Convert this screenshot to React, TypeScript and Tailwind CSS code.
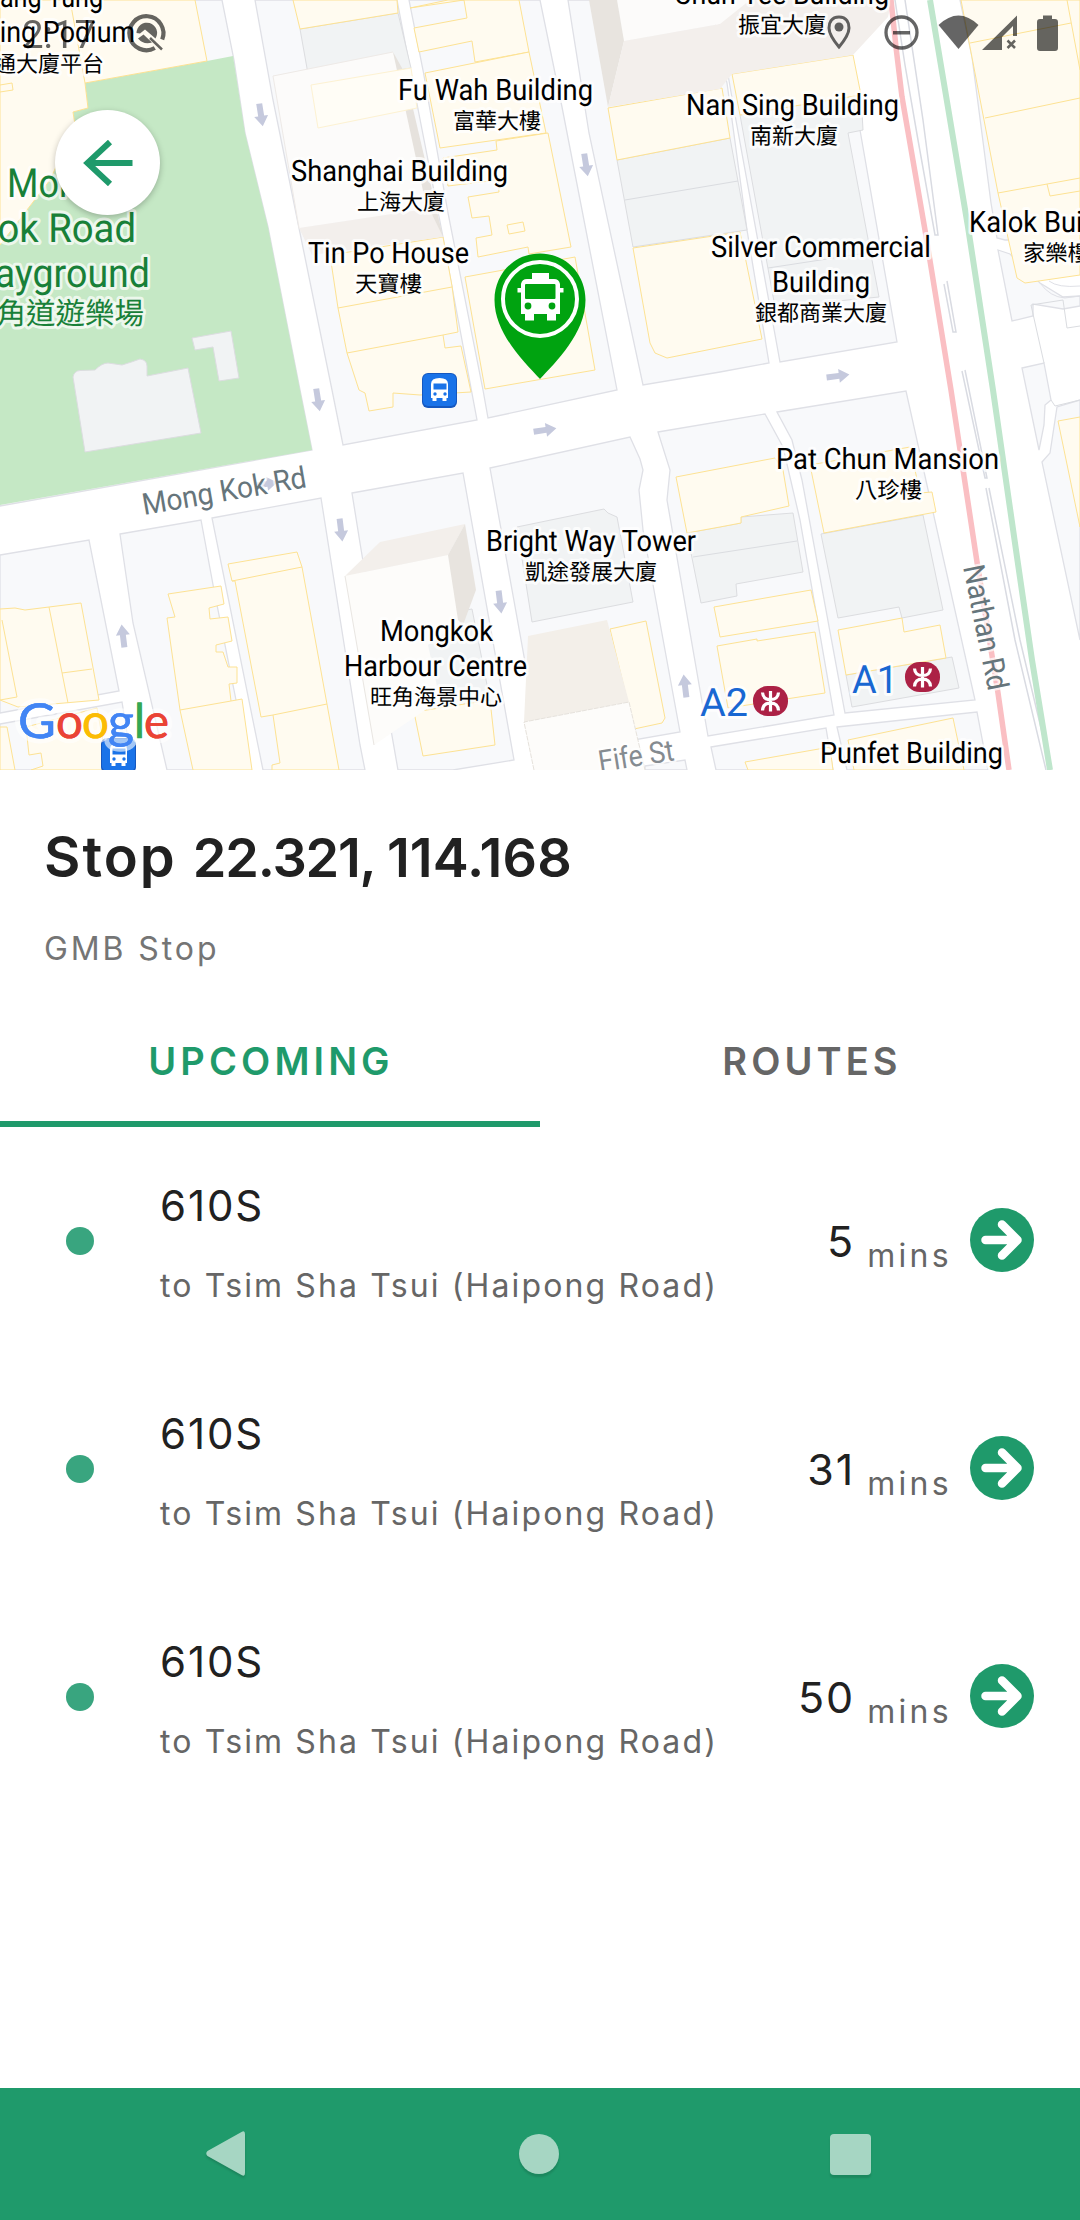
import React from "react";

const BLOCKS = [
  "0,0 222,0 234,60 245,133 268,227 300,390 312,450 0,506",
  "255,0 397,0 410,68 443,237 452,287 477,420 343,445 332,390 299,228 273,100",
  "409,0 540,0 562,107 617,390 488,418 483,390 448,213 423,70",
  "568,0 710,0 727,83 747,230 769,363 720,372 643,385 589,133",
  "715,0 842,0 860,130 897,342 780,362 735,115",
  "960,0 1080,0 1080,240 1005,240 997,238 991,203 972,57",
  "998,250 1010,254 1040,283 1063,297 1080,296 1080,306 1063,309 1033,304 1033,316 1012,321",
  "1022,368 1044,363 1051,400 1045,405 1044,425 1039,450",
  "1042,462 1050,453 1057,407 1080,400 1080,640",
  "0,555 89,540 119,691 0,713",
  "0,724 122,702 133,770 0,770",
  "120,534 201,520 214,590 250,770 167,770 133,623",
  "212,518 321,498 345,650 360,745 365,770 263,770",
  "352,493 463,473 514,760 453,770 398,770 387,707 360,543",
  "490,468 630,437 640,459 643,470 639,490 643,530 680,732 542,756",
  "645,766 685,760 687,770 645,770",
  "658,432 765,414 783,447 800,520 834,715 708,736 667,500 670,470",
  "777,412 906,391 975,700 845,713 802,480 792,440",
  "837,727 977,712 988,770 847,770",
  "711,747 826,728 833,770 716,770",
];

const CREAM = [
  "0,0 195,0 207,61 85,83 88,108 73,112 75,125 50,180 0,245",
  "293,0 397,0 398,13 300,29",
  "330,255 443,237 452,286 458,332 443,335 445,348 461,346 471,392 420,395 393,393 393,407 369,411 365,393 359,390 347,353 338,308",
  "410,8 448,0 519,0 529,52 475,62 472,41 419,52 414,28 467,18 464,0",
  "425,73 529,52 546,133 440,148",
  "443,158 497,150 496,141 548,133 571,247 529,254 528,247 478,257 476,238 492,235 489,216 472,218 468,197 499,192 498,180 448,186",
  "465,277 575,257 595,370 485,389",
  "608,108 722,88 730,138 617,160",
  "633,248 740,232 762,339 667,358 655,353 650,343",
  "732,74 853,55 861,95 740,115",
  "961,0 1080,0 1080,275 1025,283 1017,278 998,193",
  "1058,421 1080,417 1080,527",
  "0,609 15,608 25,610 49,607 81,603 99,700 18,707 0,700",
  "26,727 97,708 108,770 31,770 43,766 41,753 29,755",
  "0,727 7,727 15,770 0,770",
  "168,594 221,586 224,604 209,608 210,619 228,617 232,641 216,645 216,652 223,652 228,667 237,667 237,683 229,684 231,701 242,699 252,770 193,770 180,710 167,618 175,617",
  "228,564 297,552 302,567 339,770 272,770 272,765 280,763 273,715 261,717 235,581 232,581",
  "414,712 490,700 495,745 423,756",
  "610,629 646,621 665,718 662,723 634,729",
  "676,477 775,458 783,470 789,506 741,517 741,523 720,527 687,533",
  "714,607 811,590 818,621 720,637",
  "717,646 757,639 757,641 815,632 825,693 728,708",
  "810,465 910,447 920,493 932,492 936,512 824,533",
  "838,630 902,618 904,632 940,625 946,658 846,675",
  "848,740 953,718 964,770 854,770",
  "745,762 830,747 833,770 748,770",
];

const GREY = [
  "300,29 398,13 411,68 310,85",
  "617,160 730,138 747,230 633,247",
  "740,115 861,95 863,130 848,133 879,297 775,307",
  "405,620 472,609 490,700 413,712",
  "517,527 604,509 608,513 617,517 633,602 532,622",
  "687,533 741,523 741,517 793,513 803,572 736,584 737,596 701,603",
  "821,534 923,515 943,610 902,618 899,607 838,618",
  "846,675 952,657 959,688 852,707",
];

const CREAM_LINES = [
  "70,0 85,83", "0,85 12,83 13,90 0,92", "338,308 452,287", "347,353 443,335",
  "507,225 523,222 525,231 509,234 507,225", "970,43 1071,23", "1067,0 1080,70", "985,118 1080,98",
  "998,193 1080,178", "1047,184 1050,196 1080,191", "49,607 68,703", "62,673 92,669", "2,620 17,697 0,700",
  "180,710 231,701", "232,581 302,567", "273,715 327,704",
];

const GREY_LINES = ["625,200 738,181", "768,268 873,252", "693,557 797,541", "1044,363 1031,305 1063,300 1067,328 1080,326", "1051,400 1055,406 1080,400"];

// Pale raised buildings: roof, shaded front and shaded side
const RAISED: [string, string][] = [
  ["273,76 393,52 432,208 299,228", "#fcfbfa"],
  ["299,228 432,208 443,237 312,255", "#f3efec"],
  ["393,52 402,68 411,100 443,237 425,200", "#e6e2dd"],
  ["617,0 870,0 860,12 720,24 624,41", "#fcfbfa"],
  ["589,0 617,0 624,41 608,107", "#e8e4df"],
  ["624,41 720,24 750,0 892,0 888,17 853,55 732,74 720,89 608,107", "#f3efec"],
  ["345,576 448,555 460,622 428,645 440,700 374,745", "#fdfcfa"],
  ["345,576 380,542 465,524 448,555", "#f3efeb"],
  ["465,524 476,590 463,625 458,620 448,555", "#e8e4df"],
  ["528,636 607,620 629,702 524,722", "#f3efe9"],
  ["524,722 629,702 645,770 534,770", "#fdfcfa"],
];

type Label = { t: string; x: number; y: number; w: number };
const LABELS: Label[] = [
  { t: "Chun Yee Building", x: 674, y: 4, w: 215 },
  { t: "Fu Wah Building", x: 398, y: 100, w: 195 },
  { t: "Shanghai Building", x: 291, y: 181, w: 217 },
  { t: "Tin Po House", x: 308, y: 263, w: 161 },
  { t: "Nan Sing Building", x: 686, y: 115, w: 213 },
  { t: "Silver Commercial", x: 711, y: 257, w: 220 },
  { t: "Building", x: 772, y: 292, w: 98 },
  { t: "Kalok Building", x: 969, y: 232, w: 173 },
  { t: "Pat Chun Mansion", x: 776, y: 469, w: 223 },
  { t: "Bright Way Tower", x: 486, y: 551, w: 210 },
  { t: "Mongkok", x: 380, y: 641, w: 113 },
  { t: "Harbour Centre", x: 344, y: 676, w: 183 },
  { t: "Punfet Building", x: 820, y: 763, w: 183 },
  { t: "Wang Tung", x: -22, y: 7, w: 125 },
  { t: "Building Podium", x: -60, y: 42, w: 195 },
];
const CJK_LABELS: Label[] = [
  { t: "振宜大廈", x: 738, y: 33, w: 88 },
  { t: "富華大樓", x: 453, y: 129, w: 88 },
  { t: "上海大廈", x: 357, y: 210, w: 88 },
  { t: "天寶樓", x: 355, y: 292, w: 67 },
  { t: "南新大廈", x: 750, y: 144, w: 88 },
  { t: "銀都商業大廈", x: 755, y: 321, w: 132 },
  { t: "家樂樓", x: 1023, y: 261, w: 67 },
  { t: "八珍樓", x: 855, y: 498, w: 67 },
  { t: "凱途發展大廈", x: 525, y: 580, w: 132 },
  { t: "旺角海景中心", x: 370, y: 705, w: 132 },
  { t: "富通大廈平台", x: -28, y: 72, w: 132 },
];
const PARK_LABELS: Label[] = [
  { t: "Mong", x: 7, y: 197, w: 92 },
  { t: "Kok Road", x: -26, y: 242, w: 162 },
  { t: "Playground", x: -38, y: 287, w: 188 },
];

// x, y, angle in degrees (0 points right)
const ARROWS = [
  [261, 115, 81], [586, 165, 81], [838, 376, -7], [545, 430, -9], [318, 400, 81],
  [341, 530, 83], [500, 602, 83], [123, 636, -97], [685, 686, -97], [266, 484, -9],
];

const LATIN = 'Roboto, "Noto Sans CJK TC", sans-serif';
const CJK = '"Noto Sans CJK TC", sans-serif';

function BusBadge({ x, y }: { x: number; y: number }) {
  return (
    <g transform={`translate(${x} ${y})`}>
      <rect width="35" height="35" rx="6" fill="#1558c0" />
      <rect x="1" y="1" width="33" height="32" rx="5" fill="#1a73e8" />
      <path d="M9 11q0-6 8.500-6t8.500 6v14h-1.500v3h-4v-3h-6v3h-4v-3H9z" fill="#fff" />
      <rect x="11.500" y="10.500" width="13" height="6" fill="#1a73e8" />
      <circle cx="13" cy="21" r="1.700" fill="#1a73e8" />
      <circle cx="23" cy="21" r="1.700" fill="#1a73e8" />
    </g>
  );
}

function Metro({ x, y }: { x: number; y: number }) {
  return (
    <g transform={`translate(${x} ${y})`}>
      <rect x="-17.500" y="-15" width="35" height="30" rx="14.500" fill="#ac2145" />
      <path d="M0-10V10.500M-8-8.500Q-7.500-1.500 0-1.500T8-8.500M-8 9.500Q-7.500 2 0 2T8 9.500" fill="none" stroke="#fff" strokeWidth="3.200" />
    </g>
  );
}

const LOGO = [
  ["G", 18, 38, "#4285f4"], ["o", 56, 27, "#ea4335"], ["o", 82, 27, "#fbbc04"],
  ["g", 108, 26, "#4285f4"], ["l", 134, 11, "#34a853"], ["e", 144, 25, "#ea4335"],
] as const;

function MapView() {
  return (
    <svg viewBox="0 0 1080 770" width="1080" height="770" className="block" style={{ textRendering: "geometricPrecision" }}>
      <rect width="1080" height="770" fill="#fff" />
      <g fill="#f8f9fb" stroke="#dfe0e6" strokeWidth="1.300">
        {BLOCKS.map((p) => <polygon key={p} points={p} />)}
      </g>
      <polygon points="207,61 233,56 245,133 268,227 300,390 312,450 0,505 0,245 50,180 75,125 73,112 88,108 85,83" fill="#c5e8c5" />
      <g fill="#f1f3f4" stroke="#dcdde0" strokeWidth="1">
        <path d="M73 377Q74 371 80 370.500L95 370Q102 363 108 363L122 365Q132 362 140 359Q147 360 147 366V376L188 368 201 433 85 452z" />
        <polygon points="192,338 231,331 239,378 219,381 213,347 195,350" />
        {GREY.map((p) => <polygon key={p} points={p} />)}
      </g>
      <g fill="#fffbf0" stroke="#fde293" strokeWidth="1">
        {CREAM.map((p) => <polygon key={p} points={p} />)}
      </g>
      <g fill="none" stroke="#fde293">
        {CREAM_LINES.map((p) => <polyline key={p} points={p} />)}
      </g>
      <g fill="none" stroke="#dadce0">
        {GREY_LINES.map((p) => <polyline key={p} points={p} />)}
      </g>
      {RAISED.map(([p, f]) => <polygon key={p} points={p} fill={f} />)}
      <polyline points="299,228 273,76 393,52" fill="none" stroke="#eeeae7" />
      <polygon points="311,85 411,68 417,108 318,128" fill="#fffdf6" stroke="#fdf2d2" />
      <polyline points="345,576 374,745" fill="none" stroke="#e9e6e2" />
      <polyline points="534,770 524,722 629,702 645,770" fill="none" stroke="#e6e2dc" strokeDasharray="5 1" />
      <path d="M1040 283Q1050 297 1065 298L1080 296M1049 281Q1058 288 1080 286" fill="none" stroke="#dfe0e6" />
      <g fill="none" stroke="#d9dbe2" strokeWidth="1.500">
        <path d="M895 0L905 65 918 140 935 235H938L923 120 905 0M944 284L953 332H956L947 281M962 371L985 478H987L965 370M986 488L1015 640 1046 770M989 488L1020 640 1051 770" />
      </g>
      <path d="M891 0Q896 50 902 97L925 230 951 390 977 562 998 693 1009 770" fill="none" stroke="#fabfc3" strokeWidth="5.500" />
      <path d="M930 0L968 227 993 390 1017 557 1032 660 1050 770" fill="none" stroke="#bfe6cc" strokeWidth="6" />
      <g fill="#c5c9dd">
        {ARROWS.map(([x, y, a]) => (
          <path key={`${x}-${y}`} transform={`translate(${x} ${y}) rotate(${a})`} d="M-11.500-3H1V-7L11.500 0 1 7V3H-11.500z" />
        ))}
      </g>
      <BusBadge x={422} y={373} />
      <BusBadge x={101} y={738} />
      <Metro x={922.5} y={677} />
      <Metro x={770.5} y={701} />
      <g fontFamily={LATIN} fill="#66757b" stroke="#fff" strokeOpacity="0.700" strokeWidth="5" strokeLinejoin="round" paintOrder="stroke" fontSize="30">
        <text transform="translate(144 515) rotate(-9.700)" textLength="166" lengthAdjust="spacingAndGlyphs">Mong Kok Rd</text>
        <text transform="translate(600 772) rotate(-9)" textLength="76" lengthAdjust="spacingAndGlyphs" fill="#858b90">Fife St</text>
        <text transform="translate(963 567) rotate(78.500)" textLength="127" lengthAdjust="spacingAndGlyphs">Nathan Rd</text>
      </g>
      <g stroke="#fff" strokeOpacity="0.800" strokeWidth="6" strokeLinejoin="round" paintOrder="stroke">
        <g fontFamily={LATIN} fontSize="29.500" fill="#000">
          {LABELS.map((l) => <text key={l.t + l.y} x={l.x} y={l.y} textLength={l.w} lengthAdjust="spacingAndGlyphs">{l.t}</text>)}
        </g>
        <g fontFamily={CJK} fontSize="22.500" fill="#000">
          {CJK_LABELS.map((l) => <text key={l.t} x={l.x} y={l.y} textLength={l.w} lengthAdjust="spacingAndGlyphs">{l.t}</text>)}
        </g>
        <g fontFamily={LATIN} fontSize="40" fill="#188038" strokeOpacity="0.700">
          {PARK_LABELS.map((l) => <text key={l.t} x={l.x} y={l.y} textLength={l.w} lengthAdjust="spacingAndGlyphs">{l.t}</text>)}
          <text x="-33" y="324" fontFamily={CJK} fontSize="30" textLength="177" lengthAdjust="spacingAndGlyphs">旺角道遊樂場</text>
        </g>
        <g fontFamily={LATIN} fontSize="39" fill="#1967d2">
          <text x="852" y="693" textLength="46" lengthAdjust="spacingAndGlyphs">A1</text>
          <text x="700" y="716" textLength="48" lengthAdjust="spacingAndGlyphs">A2</text>
        </g>
      </g>
      <g fontFamily="Lato, sans-serif" fontSize="48" stroke="#fff" strokeOpacity="0.600" strokeWidth="10" strokeLinejoin="round" paintOrder="stroke">
        {LOGO.map(([c, x, w, f]) => <text key={x} x={x} y="738" textLength={w} lengthAdjust="spacingAndGlyphs" fill={f}>{c}</text>)}
      </g>
      <g fontFamily="Lato, sans-serif" fontSize="48" strokeWidth="0.500">
        {LOGO.map(([c, x, w, f]) => <text key={x} x={x} y="738" textLength={w} lengthAdjust="spacingAndGlyphs" fill={f} stroke={f}>{c}</text>)}
      </g>
      {/* selected stop pin */}
      <path d="M540 253.500C514 253.500 494.500 274 494.500 300C494.500 333 524 362 540 379C556 362 585.500 333 585.500 300C585.500 274 566 253.500 540 253.500z" fill="#00a310" />
      <circle cx="540" cy="299" r="37" fill="none" stroke="#fff" strokeWidth="4" />
      <path d="M532 273h17v6h5q5 0 6 5v4h3.500v4.500H560V314h-4v6.500h-9V314h-13v6.500h-9V314h-4V292.500h-3.500V288H521v-4q1-5 6-5h5z" fill="#fff" />
      <rect x="525" y="284" width="30.500" height="15" rx="1" fill="#00a310" />
      <circle cx="528" cy="306" r="3.400" fill="#00a310" />
      <circle cx="552" cy="306" r="3.400" fill="#00a310" />
    </svg>
  );
}

function StatusBar() {
  return (
    <div className="absolute inset-x-0 top-0 h-[66px] opacity-60">
      <svg viewBox="0 0 1080 66" width="1080" height="66" fill="#000">
        <text x="22" y="48" fontFamily="Roboto, sans-serif" fontSize="39" textLength="74" lengthAdjust="spacingAndGlyphs">2:17</text>
        <path d="M154.800 48A17 17 0 1 1 162.200 39.500" fill="none" stroke="#000" strokeWidth="4.200" />
        <path d="M136.500 33A10.300 10.300 0 1 1 155.500 38.500L145 29.500 140 33.500zM138 38.500L143.500 34.500 152 42.500Q143.500 45 138 38.500z" />
        <path d="M150 38L162 49.500" stroke="#000" strokeWidth="2.500" />
        <path d="M839 17C831 17 829 23 829 28C829 34 834 41 839 47C844 41 849 34 849 28C849 23 847 17 839 17z" fill="none" stroke="#000" strokeWidth="3" />
        <circle cx="839" cy="27" r="4.500" />
        <circle cx="901.500" cy="32.500" r="15.500" fill="none" stroke="#000" strokeWidth="3.300" />
        <path d="M893 31h17v3.500h-17z" />
        <path d="M938.500 25Q958.500 6 978.500 25L958.500 49z" />
        <path fillRule="evenodd" d="M982 50L1017 15.500V36H1013V26L1002 37V50z" />
        <path d="M1007.500 40.500L1015 48M1015 40.500L1007.500 48" stroke="#000" strokeWidth="2.500" />
        <path d="M1043 15.500h9v3.500h3q3 0 3 3v26q0 3-3 3h-15q-3 0-3-3v-26q0-3 3-3h3z" />
      </svg>
    </div>
  );
}

const ARRIVALS = [
  { id: 1, route: "610S", dest: "to Tsim Sha Tsui (Haipong Road)", mins: "5" },
  { id: 2, route: "610S", dest: "to Tsim Sha Tsui (Haipong Road)", mins: "31" },
  { id: 3, route: "610S", dest: "to Tsim Sha Tsui (Haipong Road)", mins: "50" },
];

export default function App() {
  return (
    <div className="flex h-[2220px] w-[1080px] flex-col overflow-hidden bg-white font-[Inter,sans-serif] text-[#212121]">
      <div className="relative h-[770px] shrink-0 overflow-hidden">
        <MapView />
        <StatusBar />
        <button className="absolute top-[110px] left-[55px] flex size-[105px] items-center justify-center rounded-full bg-white shadow-[0_2px_6px_rgba(0,0,0,0.25)]" aria-label="Back">
          <svg width="50" height="46" viewBox="0 0 50 46" fill="none" stroke="#1f9a6b" strokeWidth="6">
            <path d="M49.500 23H5M27 2L4.500 23 27 44" />
          </svg>
        </button>
      </div>

      <header className="px-11 pt-[55px]">
        <h1 className="h-16 text-[54px] leading-[64px] font-semibold whitespace-nowrap">
          <span className="text-[56px] tracking-[2px]">Stop </span>
          <span className="tracking-[-1.2px]">22.321, </span>
          <span className="tracking-[0.1px]">114.168</span>
        </h1>
        <p className="mt-10 text-[32px] leading-10 tracking-[2.9px] text-[#757575]">GMB Stop</p>
      </header>

      <nav className="mt-[26px] grid h-[132px] grid-cols-2 text-center text-[38px] leading-[132px] font-semibold tracking-[4.1px]">
        <div className="pl-0.5 text-[#1f9a6b] shadow-[inset_0_-6px_0_#1f9a6b]">UPCOMING</div>
        <div className="pl-1 text-[#666666]">ROUTES</div>
      </nav>

      <main className="flex-1">
        {ARRIVALS.map((a) => (
          <div key={a.id} className="flex h-[228px] items-center pr-[46px] pl-[66px]">
            <span className="size-7 rounded-full bg-[#39a57f]" />
            <div className="ml-[66px] flex flex-1 flex-col pt-[10px] whitespace-nowrap">
              <span className="text-[42px] leading-[79px] tracking-[1.9px]">{a.route}</span>
              <span className="text-[32px] leading-[82px] tracking-[2.130px] text-[#666666]">{a.dest}</span>
            </div>
            <span className="text-[43px] leading-[60px] tracking-[2px]">{a.mins}</span>
            <span className="mt-[30px] ml-[12px] text-[32px] leading-[60px] tracking-[3.300px] text-[#666666]">mins</span>
            <svg className="-mt-0.5 ml-[18px]" width="64" height="64" viewBox="0 0 64 64" fill="none">
              <circle cx="32" cy="32" r="32" fill="#1f9a6b" />
              <path d="M15.500 32H46M32 16.500L47.500 32 32 47.500" stroke="#fff" strokeWidth="8.500" strokeLinecap="round" strokeLinejoin="round" />
            </svg>
          </div>
        ))}
      </main>

      <footer className="flex h-[132px] shrink-0 items-center justify-between bg-[#1f9a6b] pr-[209px] pl-[206px]">
        <svg width="39" height="48" viewBox="0 0 39 48" fill="#a6d6c3" className="mb-px drop-shadow-[0_2px_1px_rgba(0,0,0,0.15)]">
          <path d="M35.500 2Q39 0 39 4V43Q39 47 35.500 45L1.500 26Q-1 23.500 1.500 21z" />
        </svg>
        <span className="ml-0.5 size-10 rounded-full bg-[#a6d6c3] shadow-[0_3px_2px_rgba(0,0,0,0.12)]" />
        <span className="size-[41px] rounded-[4px] bg-[#a6d6c3] shadow-[0_3px_2px_rgba(0,0,0,0.12)]" />
      </footer>
    </div>
  );
}
